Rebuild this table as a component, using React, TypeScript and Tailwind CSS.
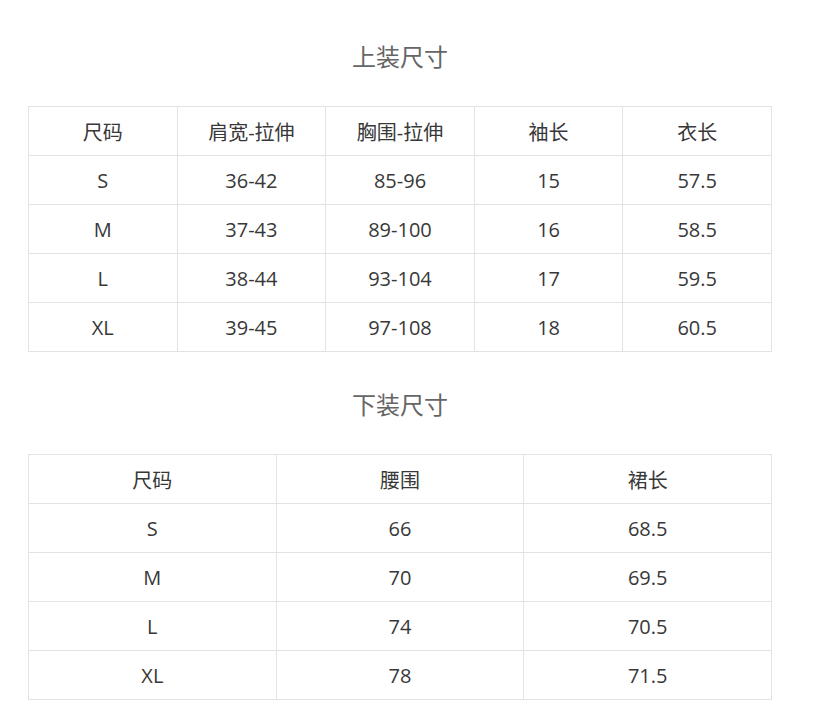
import React from 'react';

const topHead = ['尺码', '肩宽-拉伸', '胸围-拉伸', '袖长', '衣长'];
const topRows = [
  ['S', '36-42', '85-96', '15', '57.5'],
  ['M', '37-43', '89-100', '16', '58.5'],
  ['L', '38-44', '93-104', '17', '59.5'],
  ['XL', '39-45', '97-108', '18', '60.5'],
];

const bottomHead = ['尺码', '腰围', '裙长'];
const bottomRows = [
  ['S', '66', '68.5'],
  ['M', '70', '69.5'],
  ['L', '74', '70.5'],
  ['XL', '78', '71.5'],
];

const SizeTable: React.FC<{ head: string[]; rows: string[][] }> = ({ head, rows }) => (
  <table className="w-full table-fixed border-collapse text-[20px] text-[#383838]">
    <thead>
      <tr className="h-[49px]">
        {head.map((h) => (
          <td key={h} className="border border-[#e3e3e3] pt-[3px] text-center align-middle font-normal">
            {h}
          </td>
        ))}
      </tr>
    </thead>
    <tbody>
      {rows.map((r) => (
        <tr key={r[0]} className="h-[49px]">
          {r.map((c, i) => (
            <td key={i} className="border border-[#e3e3e3] pt-[2px] text-center align-middle">
              {c}
            </td>
          ))}
        </tr>
      ))}
    </tbody>
  </table>
);

export default function App() {
  return (
    <div
      className="w-[814px] min-h-[715px] bg-white pt-[33px]"
      style={{ fontFamily: '"Open Sans", "Noto Sans CJK SC", sans-serif' }}
    >
      <div className="ml-[28px] w-[744px]">
        <div className="h-[48px] leading-[48px] text-center text-[24px] text-[#666]">上装尺寸</div>
        <div className="mt-[25px]">
          <SizeTable head={topHead} rows={topRows} />
        </div>
        <div className="mt-[29px] h-[48px] leading-[48px] text-center text-[24px] text-[#666]">下装尺寸</div>
        <div className="mt-[25px]">
          <SizeTable head={bottomHead} rows={bottomRows} />
        </div>
      </div>
    </div>
  );
}
